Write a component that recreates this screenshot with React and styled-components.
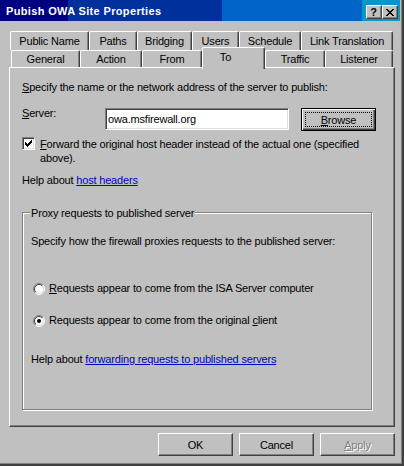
import React from "react";
import styled, { createGlobalStyle } from "styled-components";

const Face = "#c0c0c0";
const Light = "#dfdfdf";
const Shadow = "#808080";
const Dark = "#404040";
const LinkBlue = "#0000c8";

const GlobalStyle = createGlobalStyle`
  html, body {
    margin: 0;
    padding: 0;
    background: ${Face};
  }
  body {
    font-family: "Liberation Sans", Arial, sans-serif;
    font-size: 11px;
    letter-spacing: -0.18px;
    color: #000;
  }
`;

const Window = styled.div`
  width: 404px;
  height: 466px;
  box-sizing: border-box;
  background: ${Face};
  border-right: 2px solid ${Dark};
  border-bottom: 2px solid ${Dark};
  box-shadow: inset -1px -1px ${Shadow};
  display: flex;
  flex-direction: column;
`;

const TitleBar = styled.div`
  height: 21px;
  margin-right: 2px;
  padding: 0 2px 2px 6px;
  box-sizing: border-box;
  display: flex;
  align-items: flex-end;
  justify-content: space-between;
  background: linear-gradient(
    to right,
    #000080 0 68px,
    #00309c 68px 222px,
    #0064c8 222px 362px,
    #0898c8 362px
  );
`;

const Title = styled.span`
  align-self: center;
  padding-top: 2px;
  color: #fff;
  font-weight: bold;
  font-size: 11px;
  letter-spacing: 0.35px;
`;

const Caps = styled.div`
  display: flex;
`;

const CapButton = styled.div`
  width: 16px;
  height: 14px;
  box-sizing: border-box;
  background: ${Face};
  border: 1px solid;
  border-color: #fff ${Dark} ${Dark} #fff;
  box-shadow: inset -1px -1px ${Shadow};
  display: flex;
  align-items: center;
  justify-content: center;
  font-weight: bold;
  font-size: 11px;
  line-height: 11px;
  padding-right: 1px;
`;

const Body = styled.div`
  flex: 1;
  display: flex;
  flex-direction: column;
  padding: 10px 7px 0 9px;
`;

const TabRow = styled.div`
  display: flex;
  align-items: flex-end;
  height: ${(p) => p.$h}px;
  margin-left: ${(p) => p.$indent}px;
`;

const Tab = styled.div`
  flex: none;
  width: ${(p) => p.$w}px;
  height: ${(p) => (p.$active ? 22 : p.$h)}px;
  box-sizing: border-box;
  background: ${Face};
  border: 1px solid #fff;
  border-bottom: none;
  border-right-color: ${Dark};
  border-radius: 2px 2px 0 0;
  box-shadow: inset -1px 0 ${Shadow};
  display: flex;
  align-items: center;
  justify-content: center;
  padding-bottom: ${(p) => (p.$active ? 4 : 1)}px;
  padding-right: ${(p) => (p.$active ? 16 : 0)}px;
  margin-bottom: ${(p) => (p.$active ? -2 : 0)}px;
  position: ${(p) => (p.$active ? "relative" : "static")};
  z-index: ${(p) => (p.$active ? 1 : "auto")};
  white-space: nowrap;
`;

const Panel = styled.div`
  height: 360px;
  box-sizing: border-box;
  border: 1px solid;
  border-color: #fff ${Dark} ${Dark} #fff;
  box-shadow: inset -1px -1px ${Shadow};
  padding: 13px 12px 0 12px;
  display: flex;
  flex-direction: column;
`;

const Line = styled.div`
  line-height: ${(p) => p.$lh || 13}px;
  margin-top: ${(p) => p.$mt || 0}px;
  white-space: nowrap;
`;

const Link = styled.a`
  color: ${LinkBlue};
  text-decoration: underline;
  cursor: pointer;
`;

const FieldRow = styled.div`
  display: flex;
  align-items: flex-start;
  margin-top: 14px;
`;

const FieldLabel = styled.label`
  width: 83px;
  line-height: 11px;
`;

const TextInput = styled.input`
  width: 184px;
  height: 22px;
  box-sizing: border-box;
  margin: 0;
  padding: 0 0 0 2px;
  border: 1px solid;
  border-color: ${Shadow} #fff #fff ${Shadow};
  box-shadow: inset 1px 1px ${Dark}, inset -1px -1px ${Light};
  background: #fff;
  font-family: "Liberation Sans", Arial, sans-serif;
  font-size: 11px;
  letter-spacing: -0.18px;
  color: #000;
  outline: none;
`;

const Button = styled.button`
  width: 75px;
  height: 23px;
  box-sizing: border-box;
  margin: 0;
  padding: 0;
  background: ${Face};
  font-family: "Liberation Sans", Arial, sans-serif;
  font-size: 11px;
  letter-spacing: -0.18px;
  color: ${(p) => (p.disabled ? Shadow : "#000")};
  text-shadow: ${(p) => (p.disabled ? "1px 1px #fff" : "none")};
  border: 1px solid;
  border-color: #fff ${Dark} ${Dark} #fff;
  box-shadow: inset -1px -1px ${Shadow};
  display: flex;
  align-items: center;
  justify-content: center;
`;

const DefaultButton = styled(Button)`
  margin-left: 12px;
  border: 1px solid #000;
  box-shadow: inset 1px 1px #fff, inset -1px -1px ${Dark}, inset -2px -2px ${Shadow};
  padding: 3px;
`;

const FocusRect = styled.span`
  flex: 1;
  align-self: stretch;
  border: 1px dotted #000;
  display: flex;
  align-items: center;
  justify-content: center;
`;

const CheckRow = styled.div`
  display: flex;
  align-items: flex-start;
  gap: 5px;
  margin-top: 6px;
`;

const CheckBox = styled.span`
  flex: none;
  width: 13px;
  height: 13px;
  box-sizing: border-box;
  background: #fff;
  border: 1px solid;
  border-color: ${Shadow} #fff #fff ${Shadow};
  box-shadow: inset 1px 1px ${Dark}, inset -1px -1px ${Light};
  display: flex;
  padding: 2px 0 0 2px;
`;

const CheckText = styled.div`
  display: flex;
  flex-direction: column;
`;

const Group = styled.div`
  position: relative;
  width: 350px;
  height: 198px;
  box-sizing: border-box;
  margin-top: 25px;
  border: 1px solid ${Shadow};
  box-shadow: inset 1px 1px #fff, 1px 1px 0 #fff;
  padding: 22px 0 0 8px;
  display: flex;
  flex-direction: column;
`;

const GroupLabel = styled.span`
  position: absolute;
  top: -6px;
  left: 7px;
  padding: 0 1px;
  background: ${Face};
  line-height: 13px;
`;

const RadioRow = styled.div`
  display: flex;
  align-items: center;
  gap: 4px;
  margin-left: 2px;
  margin-top: ${(p) => p.$mt}px;
  line-height: 13px;
`;

const ButtonBar = styled.div`
  display: flex;
  justify-content: flex-end;
  gap: 6px;
  margin-top: 6px;
`;

const CheckMark = () => (
  <svg width="7" height="7" shapeRendering="crispEdges">
    {[2, 3, 4, 3, 2, 1, 0].map((y, x) => (
      <rect key={x} x={x} y={y} width="1" height="3" fill="#000" />
    ))}
  </svg>
);

const Radio = ({ checked }) => (
  <svg width="12" height="12">
    <defs>
      <linearGradient id="rOuter" x1="0" y1="0" x2="1" y2="1">
        <stop offset="0.5" stopColor={Shadow} />
        <stop offset="0.5" stopColor="#fff" />
      </linearGradient>
      <linearGradient id="rInner" x1="0" y1="0" x2="1" y2="1">
        <stop offset="0.5" stopColor={Dark} />
        <stop offset="0.5" stopColor={Light} />
      </linearGradient>
    </defs>
    <circle cx="6" cy="6" r="5.5" fill="none" stroke="url(#rOuter)" />
    <circle cx="6" cy="6" r="4.5" fill="#fff" stroke="url(#rInner)" />
    {checked && <circle cx="6" cy="6" r="2" fill="#000" />}
  </svg>
);

const CloseGlyph = () => (
  <svg width="8" height="7" shapeRendering="crispEdges">
    <path d="M0 0h2l2 2.5L6 0h2L5 3.5 8 7H6L4 4.5 2 7H0l3-3.5z" fill="#000" />
  </svg>
);

const backTabs = [
  ["Public Name", 79],
  ["Paths", 48],
  ["Bridging", 55],
  ["Users", 47],
  ["Schedule", 62],
  ["Link Translation", 92],
];

const frontTabs = [
  ["General", 69],
  ["Action", 62],
  ["From", 60],
  ["To", 63],
  ["Traffic", 60],
  ["Listener", 68],
];

export default function App() {
  return (
    <>
      <GlobalStyle />
      <Window>
        <TitleBar>
          <Title>Pubish OWA Site Properties</Title>
          <Caps>
            <CapButton>?</CapButton>
            <CapButton>
              <CloseGlyph />
            </CapButton>
          </Caps>
        </TitleBar>
        <Body>
          <TabRow $h={19} $indent={1}>
            {backTabs.map(([label, w]) => (
              <Tab key={label} $w={w} $h={19}>
                {label}
              </Tab>
            ))}
          </TabRow>
          <TabRow $h={17} $indent={2}>
            {frontTabs.map(([label, w]) => (
              <Tab key={label} $w={w} $h={17} $active={label === "To"}>
                {label}
              </Tab>
            ))}
          </TabRow>
          <Panel>
            <Line>
              <u>S</u>pecify the name or the network address of the server to publish:
            </Line>
            <FieldRow>
              <FieldLabel>
                <u>S</u>erver:
              </FieldLabel>
              <TextInput defaultValue="owa.msfirewall.org" readOnly />
              <DefaultButton>
                <FocusRect>
                  <u>B</u>rowse
                </FocusRect>
              </DefaultButton>
            </FieldRow>
            <CheckRow>
              <CheckBox>
                <CheckMark />
              </CheckBox>
              <CheckText>
                <Line $lh={14}>
                  <u>F</u>orward the original host header instead of the actual one (specified
                </Line>
                <Line $lh={14}>above).</Line>
              </CheckText>
            </CheckRow>
            <Line $mt={9}>
              Help about <Link>host headers</Link>
            </Line>
            <Group>
              <GroupLabel>Proxy requests to published server</GroupLabel>
              <Line>Specify how the firewall proxies requests to the published server:</Line>
              <RadioRow $mt={34}>
                <Radio />
                <span>
                  <u>R</u>equests appear to come from the ISA Server computer
                </span>
              </RadioRow>
              <RadioRow $mt={19}>
                <Radio checked />
                <span>
                  Requests appear to come from the original <u>c</u>lient
                </span>
              </RadioRow>
              <Line $mt={26}>
                Help about <Link>forwarding requests to published servers</Link>
              </Line>
            </Group>
          </Panel>
          <ButtonBar>
            <Button>OK</Button>
            <Button>Cancel</Button>
            <Button disabled>
              <span>
                <u>A</u>pply
              </span>
            </Button>
          </ButtonBar>
        </Body>
      </Window>
    </>
  );
}
